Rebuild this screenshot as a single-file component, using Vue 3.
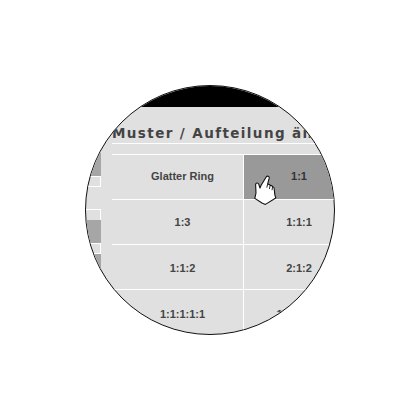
<template>
  <div class="stage">
    <div class="lens">
      <div class="topbar"></div>
      <div class="content">
        <div class="side">
          <div class="side-cell dark first"></div>
          <div class="side-cell boxed"></div>
          <div class="side-gap"></div>
          <div class="side-cell boxed top"></div>
          <div class="side-cell dark mid"></div>
          <div class="side-cell boxed"></div>
          <div class="side-cell dark last"></div>
        </div>
        <div class="main">
          <h3 class="title">Muster / Aufteilung ändern</h3>
          <div class="rule"></div>
          <div class="grid">
            <div v-for="c in cells" :key="c.label" class="cell" :class="{ active: c.active }">
              {{ c.label }}
              <svg v-if="c.active" class="hand" viewBox="0 0 24 30" width="24" height="30">
                <path d="M8 10.5 L13.2 2 C14.2 .5 16.6 1.2 16.2 3.2 L14.6 9.2 C15.8 9 16.8 9.6 17.2 10.4 C18.2 10.2 19.2 10.8 19.6 11.8 C20.6 11.8 21.2 12.6 21.2 13.8 L21.8 19.6 L22.8 23 L12.4 29.4 L9 28 L1.8 23.4 L3 18 L2.6 9.6 C2.8 7.6 5.2 7.6 5.8 9.4 L7 13 Z" fill="#fff" stroke="#111" stroke-width="1.1" stroke-linejoin="round" />
                <path d="M14.6 9.2 L13.8 12.6 M17.2 10.4 L16.4 14 M19.6 11.8 L19 15.2" fill="none" stroke="#111" stroke-width=".9" />
              </svg>
            </div>
          </div>
        </div>
      </div>
    </div>
  </div>
</template>

<script setup>
const cells = [
  { label: 'Glatter Ring' },
  { label: '1:1', active: true },
  { label: '1:3' },
  { label: '1:1:1' },
  { label: '1:1:2' },
  { label: '2:1:2' },
  { label: '1:1:1:1:1' },
  { label: '1:2:1:2:1' },
]
</script>

<style>
html, body { background: #fff; }
</style>

<style scoped>
.stage { width: 420px; height: 420px; padding-top: 85px; box-sizing: border-box; }
.lens { width: 250px; height: 250px; margin: 0 auto; box-sizing: border-box; border: 1.5px solid #111; border-radius: 50%; overflow: hidden; background: #e0e0e0; font-family: "Liberation Sans", Arial, sans-serif; }
.topbar { height: 21px; background: #000; }
.content { display: flex; width: 300px; }
.side { width: 15px; margin-right: 11px; padding-top: 46px; flex: none; }
.side-cell { box-sizing: border-box; }
.side-cell.dark { background: #a6a6a6; }
.first { height: 23px; }
.boxed { height: 11px; border-top: 1px solid #fff; border-bottom: 1px solid #fff; border-right: 1px solid #fff; }
.side-gap { height: 22px; }
.top { border-bottom: none; }
.mid { height: 23px; }
.last { height: 30px; }
.main { flex: none; width: 270px; }
.title { margin: 0; height: 36px; padding-top: 18px; box-sizing: border-box; font-family: "DejaVu Sans", Verdana, sans-serif; font-size: 13.5px; line-height: 17px; font-weight: 700; letter-spacing: 1.4px; color: #444; white-space: nowrap; }
.rule { height: 1px; background: #fff; margin-bottom: 10px; }
.grid { display: grid; grid-template-columns: 132px 110px; grid-auto-rows: 45px; border-top: 1px solid #fff; }
.cell { position: relative; box-sizing: border-box; display: flex; align-items: center; justify-content: center; padding-top: 1px; border-bottom: 1px solid #fff; font-size: 11px; font-weight: 700; color: #444; }
.cell:nth-child(odd) { padding-left: 10px; border-right: 1px solid #fff; }
.cell:nth-child(-n+2) { padding-top: 0; padding-bottom: 3px; }
.cell:nth-child(3), .cell:nth-child(4) { padding-top: 0; padding-bottom: 1px; }
.cell:nth-child(n+7) { height: 49px; padding-top: 0; }
.cell.active { background: #999; color: #333; }
.hand { position: absolute; left: 9px; top: 20px; }
</style>
